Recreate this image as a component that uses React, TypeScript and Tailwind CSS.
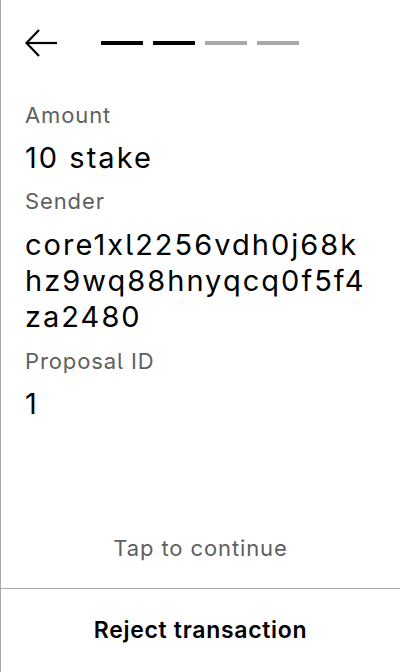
import React from "react";

function Label({ children }: { children: React.ReactNode }) {
  return <div className="text-[22px] leading-[28px] tracking-[0.04em] text-[#5f5f5f]">{children}</div>;
}

function Value({ children, tall }: { children: React.ReactNode; tall?: boolean }) {
  return (
    <div
      className={
        tall
          ? "text-[29px] leading-[36px] tracking-[0.07em] text-black whitespace-nowrap"
          : "text-[29px] leading-[34px] tracking-[0.07em] text-black whitespace-nowrap"
      }
    >
      {children}
    </div>
  );
}

export default function App() {
  return (
    <div
      className="w-[400px] h-[672px] flex flex-col border-l border-[#a8a8a8] bg-white [font-feature-settings:'cv05']"
      style={{ fontFamily: "Inter, 'Noto Sans', sans-serif" }}
    >
      <div className="flex items-center pl-6 pt-[27px] h-[59px]">
        <svg width="32" height="32" viewBox="0 0 32 32" fill="none" stroke="black" strokeWidth="2.2">
          <path d="M32 16 H2" />
          <path d="M14 3 L1.5 16 L14 29" />
        </svg>
        <div className="ml-[44px] flex gap-[10px]">
          <div className="w-[42px] h-[4px] bg-black" />
          <div className="w-[42px] h-[4px] bg-black" />
          <div className="w-[42px] h-[4px] bg-[#aaaaaa]" />
          <div className="w-[42px] h-[4px] bg-[#aaaaaa]" />
        </div>
      </div>
      <div className="flex flex-col gap-[12px] px-6 pt-[42px]">
        <Label>Amount</Label>
        <Value>10 stake</Value>
        <Label>Sender</Label>
        <Value tall>
          <div>core1xl2256vdh0j68k</div>
          <div>hz9wq88hnyqcq0f5f4</div>
          <div>za2480</div>
        </Value>
        <Label>Proposal ID</Label>
        <Value>1</Value>
      </div>
      <div className="flex-1" />
      <div className="text-center text-[22px] leading-[28px] tracking-[0.04em] text-[#5f5f5f] mb-[26px]">
        Tap to continue
      </div>
      <div className="border-t border-[#a8a8a8] h-[84px] flex items-center justify-center text-[23px] tracking-[0.03em] font-semibold text-black">
        Reject transaction
      </div>
    </div>
  );
}
